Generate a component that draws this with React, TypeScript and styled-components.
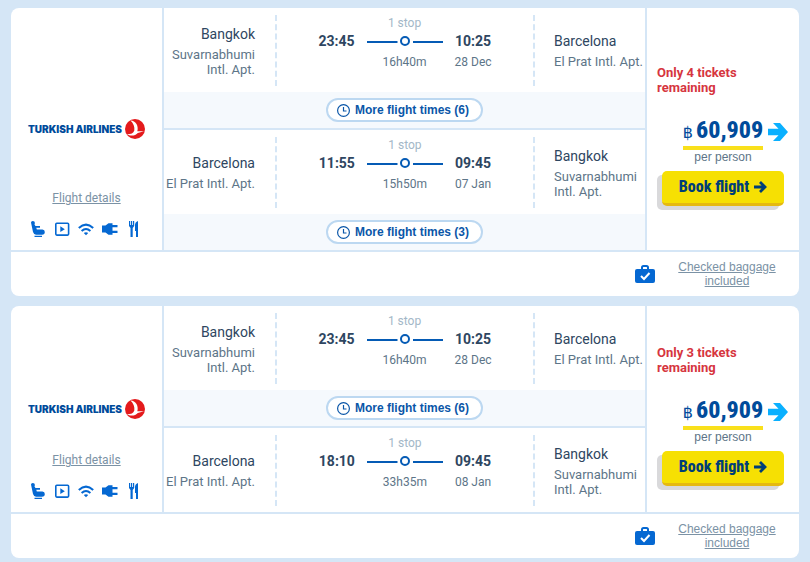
import React from "react";
import styled, { createGlobalStyle } from "styled-components";

const Global = createGlobalStyle`
  * { box-sizing: border-box; }
  body {
    margin: 0;
    background: #d5e6f6;
    font-family: Roboto, "Liberation Sans", sans-serif;
    color: #5d7588;
  }
  button { font: inherit; cursor: pointer; }
  svg { display: block; flex-shrink: 0; }
`;

const Page = styled.main`
  display: flex;
  flex-direction: column;
  gap: 10px;
  padding: 8px 11px 4px;
`;

const Card = styled.article`
  background: #fff;
  border-radius: 8px;
  overflow: hidden;
`;

const Body = styled.div`
  display: grid;
  grid-template-columns: 151px minmax(0, 1fr) 152px;
`;

const Airline = styled.section`
  display: grid;
  grid-template-rows: 1fr auto 1fr;
  justify-items: center;
`;

const Logo = styled.div`
  grid-row: 2;
  display: flex;
  align-items: center;
  gap: 3px;
  color: #004b9b;
  font: 900 10px/20px Inter, sans-serif;
  white-space: nowrap;
`;

const Extras = styled.div`
  grid-row: 3;
  align-self: end;
  display: flex;
  flex-direction: column;
  align-items: center;
  gap: 15px;
  padding-bottom: 13px;
`;

const TextLink = styled.a`
  color: #7b92a5;
  font-size: 12px;
  line-height: 16px;
  text-decoration: underline;
`;

const Amenities = styled.div`
  display: flex;
  gap: 8px;
  padding-right: 2px;
  color: #0568d2;
`;

const Legs = styled.section`
  border: solid #d5e6f6;
  border-width: 0 2px;
`;

const Leg = styled.div`
  & + & { border-top: 2px solid #d5e6f6; }
`;

const Route = styled.div`
  display: grid;
  grid-template-columns: 111px minmax(0, 1fr) 110px;
  align-items: center;
  min-height: 84px;
`;

const Place = styled.div<{ $from?: boolean }>`
  padding: ${(p) => (p.$from ? "0 20px 0 0" : "0 0 0 19px")};
  text-align: ${(p) => (p.$from ? "right" : "left")};
`;

const City = styled.div`
  margin-bottom: 3px;
  color: #2e4661;
  font-size: 14px;
  line-height: 20px;
`;

const Airport = styled.div`
  font-size: 13px;
  line-height: 15px;
`;

const Times = styled.div`
  display: grid;
  grid-template: 17px 18px 25px / auto 76px auto;
  column-gap: 12px;
  align-content: start;
  justify-content: center;
  place-items: center;
  height: 71px;
  border: dashed #d5e6f6;
  border-width: 0 2px;
`;

const Time = styled.strong`
  color: #2e4661;
  font-size: 14px;
  font-weight: 700;
`;

const Note = styled.span<{ $light?: boolean; $col?: number }>`
  grid-column: ${(p) => p.$col ?? 2};
  color: ${(p) => (p.$light ? "#a3b7c7" : "#5d7588")};
  font-size: 12px;
`;

const StopGraphic = styled.svg`
  grid-column: 2;
`;

const DepartTime = styled(Time)`
  grid-area: 2 / 1;
`;

const More = styled.div`
  display: flex;
  align-items: center;
  justify-content: center;
  height: 36px;
  background: #f5f9fd;
`;

const MoreButton = styled.button`
  display: flex;
  align-items: center;
  gap: 5px;
  height: 24px;
  padding: 0 12px 0 9px;
  border: 2px solid #bcd8f1;
  border-radius: 12px;
  background: #fff;
  color: #0a56a8;
  font: 700 12px/16px "Liberation Sans", sans-serif;
`;

const Offer = styled.section`
  display: flex;
  flex-direction: column;
  justify-content: center;
  padding: 12px 10px 0;
`;

const Warning = styled.strong`
  color: #d63540;
  font-size: 13px;
  line-height: 15px;
`;

const PriceRow = styled.div`
  display: grid;
  grid-template-columns: 1fr auto 1fr;
  align-items: center;
  column-gap: 5px;
  margin: 19px 0 0;
`;

const Price = styled.div`
  grid-column: 2;
  display: flex;
  align-items: baseline;
  gap: 3px;
  border-bottom: 4px solid #f9e01b;
  color: #004b9b;
  font: 800 24px/32px "Roboto Condensed", Roboto, sans-serif;
  white-space: nowrap;
`;

const Baht = styled.span`
  font: 400 16px/20px Roboto, "DejaVu Sans", sans-serif;
`;

const PerPerson = styled.div`
  margin-bottom: 7px;
  text-align: center;
  font: 400 12px/14px "Liberation Sans", sans-serif;
`;

const Book = styled.button`
  align-self: center;
  display: flex;
  align-items: center;
  justify-content: center;
  gap: 5px;
  width: 122px;
  height: 35px;
  border: 0;
  border-bottom: 3px solid #e5b911;
  border-radius: 5px;
  background: #f6e003;
  box-shadow: -5px 4px 0 #d9d9db;
  color: #003e78;
  font: 800 16px/20px "Roboto Condensed", Roboto, sans-serif;
  white-space: nowrap;
`;

const Footer = styled.footer`
  display: flex;
  align-items: center;
  justify-content: flex-end;
  gap: 20px;
  min-height: 46px;
  padding-right: 20px;
  border-top: 2px solid #d5e6f6;
`;

const BaggageLink = styled(TextLink)`
  width: 104px;
  text-align: center;
  font-family: "Liberation Sans", sans-serif;
  line-height: 14px;
`;

const AirlineMark = () => (
  <svg width="20" height="20" viewBox="0 0 20 20" aria-hidden="true">
    <circle cx="10" cy="10" r="10" fill="#e41a1c" />
    <path d="M5.500 1.500C7.500 1.300 10 2.500 11.500 5 12.800 7.500 13 10 12.300 12.200L19 12.300 12.800 14C10.500 16.800 5.500 17.500 1.800 15.200 5.500 15.300 8.500 14.500 9.300 11.500 9.800 8 8.500 4 5.500 1.500Z" fill="#fff" />
  </svg>
);

const SeatIcon = () => (
  <svg width="16" height="16" viewBox="0 0 16 16" fill="currentColor" aria-hidden="true">
    <path d="M1 1.500Q1 0 2.800 0 4.900 0 4.900 2L4.500 3.500 5.500 5H10V6.800H6.300L6.800 8.500H12.500Q14.800 8.700 14.800 11 14.800 13.800 12 13.800H6Q4 13.800 3 11ZM4.500 14.800H12V16H4.500Z" />
  </svg>
);
const PlayIcon = () => (
  <svg width="16" height="16" viewBox="0 0 16 16" aria-hidden="true">
    <rect x="1.800" y="2.300" width="12.800" height="11.800" rx="1" fill="none" stroke="currentColor" strokeWidth="1.600" />
    <path d="M6.300 5.300V11L10.800 8.150Z" fill="currentColor" />
  </svg>
);
const WifiIcon = () => (
  <svg width="16" height="16" viewBox="0 0 16 16" fill="none" stroke="currentColor" strokeWidth="2" aria-hidden="true">
    <path d="M.8 7Q8 .3 15.200 7M3.600 10Q8 6 12.400 10" />
    <path d="M5.800 11.900Q8 10.400 10.200 11.900L8 14.300Z" fill="currentColor" stroke="none" />
  </svg>
);
const PlugIcon = () => (
  <svg width="16" height="16" viewBox="0 0 16 16" fill="currentColor" aria-hidden="true">
    <path d="M0 4.500H3.500L6.500 2.200H10.500V4H15.500V6.200H10.500V9.800H15.500V12H10.500V13.800H6.500L3.500 11.500H0Z" />
  </svg>
);
const CutleryIcon = () => (
  <svg width="16" height="16" viewBox="0 0 16 16" fill="currentColor" aria-hidden="true">
    <path d="M3 0H4.200V4H5V0H6.200V4H7V0H8.200V5L6.700 7V16H4.500V7L3 5ZM12 0V16H10V10H9V4Q9 1 12 0Z" />
  </svg>
);
const StopLine = () => (
  <StopGraphic width="76" height="12" viewBox="0 0 76 12" fill="none" stroke="#055bb5" strokeWidth="2" aria-hidden="true">
    <path d="M0 7H30.500M46 7H76" />
    <circle cx="38" cy="6" r="4" />
  </StopGraphic>
);
const ClockIcon = () => (
  <svg width="13" height="13" viewBox="0 0 13 13" fill="none" stroke="currentColor" strokeWidth="1.200" aria-hidden="true">
    <circle cx="6.500" cy="6.500" r="5.900" />
    <path d="M6.500 3V7H9.500" />
  </svg>
);
const PriceArrow = () => (
  <svg width="20" height="20" viewBox="0 0 20 20" fill="#0ab0ff" aria-hidden="true">
    <path d="M0 6.800H10.500L5 1H12L20 10 12 19H5L10.500 13.200H0Z" />
  </svg>
);
const BookArrow = () => (
  <svg width="13" height="12" viewBox="0 0 13 12" fill="none" stroke="currentColor" strokeWidth="2.800" aria-hidden="true">
    <path d="M0 6H11M6 1L11 6 6 11" />
  </svg>
);
const BaggageIcon = () => (
  <svg width="20" height="18" viewBox="0 0 20 18" aria-hidden="true">
    <path d="M7 5V2.500Q7 1 8.500 1H11.500Q13 1 13 2.500V5" fill="none" stroke="#0568d2" strokeWidth="2" />
    <rect y="4" width="20" height="14" rx="2" fill="#0568d2" />
    <path d="M6 11L9 14 14.500 8" fill="none" stroke="#fff" strokeWidth="2" />
  </svg>
);

type Stop = { city: string; airport: string };
type LegData = {
  from: Stop; to: Stop; depart: string; arrive: string;
  duration: string; date: string; more?: number;
};

const bangkok: Stop = { city: "Bangkok", airport: "Suvarnabhumi Intl. Apt." };
const barcelona: Stop = { city: "Barcelona", airport: "El Prat Intl. Apt." };
const outbound: LegData = {
  from: bangkok, to: barcelona, depart: "23:45", arrive: "10:25",
  duration: "16h40m", date: "28 Dec", more: 6,
};

const offers: { tickets: number; legs: LegData[] }[] = [
  { tickets: 4, legs: [outbound, { from: barcelona, to: bangkok, depart: "11:55", arrive: "09:45", duration: "15h50m", date: "07 Jan", more: 3 }] },
  { tickets: 3, legs: [outbound, { from: barcelona, to: bangkok, depart: "18:10", arrive: "09:45", duration: "33h35m", date: "08 Jan" }] },
];

const LegRow = ({ leg }: { leg: LegData }) => (
  <Leg>
    <Route>
      <Place $from>
        <City>{leg.from.city}</City>
        <Airport>{leg.from.airport}</Airport>
      </Place>
      <Times>
        <Note $light>1 stop</Note>
        <DepartTime>{leg.depart}</DepartTime>
        <StopLine />
        <Time>{leg.arrive}</Time>
        <Note>{leg.duration}</Note>
        <Note $col={3}>{leg.date}</Note>
      </Times>
      <Place>
        <City>{leg.to.city}</City>
        <Airport>{leg.to.airport}</Airport>
      </Place>
    </Route>
    {leg.more && (
      <More>
        <MoreButton type="button"><ClockIcon />More flight times ({leg.more})</MoreButton>
      </More>
    )}
  </Leg>
);

export default function App() {
  return (
    <>
      <Global />
      <Page>
        {offers.map((offer) => (
          <Card key={offer.tickets}>
            <Body>
              <Airline>
                <Logo>TURKISH AIRLINES<AirlineMark /></Logo>
                <Extras>
                  <TextLink href="#details">Flight details</TextLink>
                  <Amenities>
                    <SeatIcon /><PlayIcon /><WifiIcon /><PlugIcon /><CutleryIcon />
                  </Amenities>
                </Extras>
              </Airline>
              <Legs>
                {offer.legs.map((leg) => <LegRow key={leg.from.city} leg={leg} />)}
              </Legs>
              <Offer>
                <Warning>Only {offer.tickets} tickets<br />remaining</Warning>
                <PriceRow>
                  <Price><Baht>฿</Baht>60,909</Price>
                  <PriceArrow />
                </PriceRow>
                <PerPerson>per person</PerPerson>
                <Book type="button">Book flight<BookArrow /></Book>
              </Offer>
            </Body>
            <Footer>
              <BaggageIcon />
              <BaggageLink href="#baggage">Checked baggage included</BaggageLink>
            </Footer>
          </Card>
        ))}
      </Page>
    </>
  );
}
